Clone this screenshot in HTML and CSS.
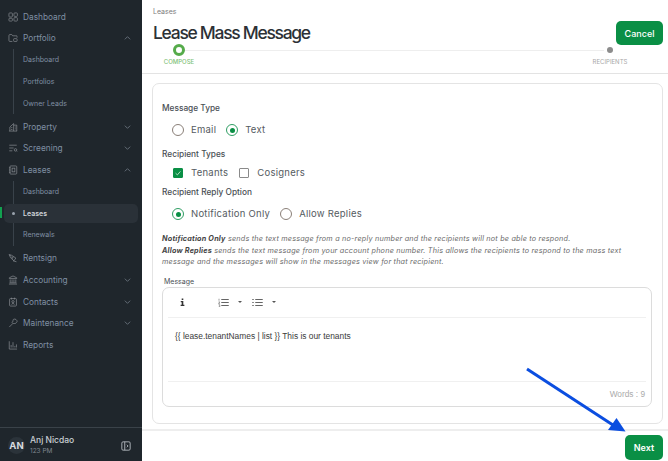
FILE: index.html
```html
<!DOCTYPE html>
<html lang="en">
<head>
<meta charset="utf-8">
<title>Lease Mass Message</title>
<link rel="stylesheet" href="styles.css">
</head>
<body>
<div class="app">
  <aside class="sidebar">
    <nav class="nav">
      <a class="item"><svg class="ico" viewBox="0 0 16 16"><rect x="1.500" y="1.500" width="5.500" height="6.500" rx="1.200"/><rect x="9.500" y="1.500" width="5.500" height="5.500" rx="1.200"/><rect x="1.500" y="10" width="5.500" height="4.500" rx="1.200"/><rect x="9.500" y="9" width="5.500" height="5.500" rx="1.200"/></svg><span>Dashboard</span></a>
      <a class="item"><svg class="ico" viewBox="0 0 16 16"><path d="M7 13.500H3a1.500 1.500 0 0 1-1.500-1.500V4A1.500 1.500 0 0 1 3 2.500h3l1.500 2h5A1.500 1.500 0 0 1 14.500 6v1.500"/><rect x="9" y="9" width="5.500" height="4.500" rx="1"/></svg><span>Portfolio</span><svg class="chev" viewBox="0 0 10 6"><path d="M1 5l4-4 4 4"/></svg></a>
      <div class="sub">
        <a class="subitem">Dashboard</a>
        <a class="subitem">Portfolios</a>
        <a class="subitem">Owner Leads</a>
      </div>
      <a class="item"><svg class="ico" viewBox="0 0 16 16"><path d="M1.500 14.500h13M3 14.500V8l6-5.500V14.500M9 5h5v9.500M11 8h1.500M11 11h1.500M5 9h2M5 12h2"/></svg><span>Property</span><svg class="chev" viewBox="0 0 10 6"><path d="M1 1l4 4 4-4"/></svg></a>
      <a class="item"><svg class="ico" viewBox="0 0 16 16"><path d="M2 3.500h12M2 8h7M2 12.500h5"/><circle cx="12" cy="11" r="2"/><path d="M13.500 12.500l1 1"/></svg><span>Screening</span><svg class="chev" viewBox="0 0 10 6"><path d="M1 1l4 4 4-4"/></svg></a>
      <a class="item"><svg class="ico" viewBox="0 0 16 16"><rect x="3" y="1.500" width="11" height="13" rx="1.500"/><path d="M1.500 4.500h3M1.500 8h3M1.500 11.500h3"/><rect x="6.500" y="5" width="4.500" height="6"/></svg><span>Leases</span><svg class="chev" viewBox="0 0 10 6"><path d="M1 5l4-4 4 4"/></svg></a>
      <div class="sub">
        <a class="subitem">Dashboard</a>
        <a class="subitem current">Leases</a>
        <a class="subitem">Renewals</a>
      </div>
      <a class="item"><svg class="ico" viewBox="0 0 16 16"><path d="M2 2.500l3.500 1 7 4.500-3 4.500-5.500-5zM2 2.500l3 3M8 12.500l5.500 1.500"/><circle cx="7" cy="7.500" r="1"/></svg><span>Rentsign</span></a>
      <a class="item"><svg class="ico" viewBox="0 0 16 16"><path d="M8 1.500l6 3v1H2v-1zM3.500 7v5M6.500 7v5M9.500 7v5M12.500 7v5M2.500 12.500h11M1.500 14.500h13"/></svg><span>Accounting</span><svg class="chev" viewBox="0 0 10 6"><path d="M1 1l4 4 4-4"/></svg></a>
      <a class="item"><svg class="ico" viewBox="0 0 16 16"><rect x="2.500" y="2.500" width="11" height="12" rx="1.500"/><path d="M5.500 1v3M10.500 1v3M5.500 12c.5-2 4.500-2 5 0"/><circle cx="8" cy="7.500" r="1.800"/></svg><span>Contacts</span><svg class="chev" viewBox="0 0 10 6"><path d="M1 1l4 4 4-4"/></svg></a>
      <a class="item"><svg class="ico" viewBox="0 0 16 16"><path d="M2 14.500l6-6M6.500 7l2.500 2.500 1-1 1 1 3.500-3.500A4 4 0 0 0 9 2L7.500 3.500l1 1z"/></svg><span>Maintenance</span><svg class="chev" viewBox="0 0 10 6"><path d="M1 1l4 4 4-4"/></svg></a>
      <a class="item"><svg class="ico" viewBox="0 0 16 16"><path d="M2 2v12.500h12.500M5 12V8M8 12V3.500M11 12V9.500M13.500 12V7"/></svg><span>Reports</span></a>
    </nav>
    <div class="user">
      <div class="avatar">AN</div>
      <div class="who">
        <div class="name">Anj Nicdao</div>
        <div class="time">123 PM</div>
      </div>
      <svg class="collapse" viewBox="0 0 12 12"><rect x="1" y="1" width="10" height="10" rx="1.500"/><path d="M4.500 1v10M7 4.500L8.500 6 7 7.500"/></svg>
    </div>
    <span class="marker"></span>
  </aside>

  <main class="main">
    <header class="head">
      <div class="head-top">
        <div>
          <div class="crumb">Leases</div>
          <h1 class="title">Lease Mass Message</h1>
        </div>
        <button class="btn">Cancel</button>
      </div>
      <div class="steps">
        <div class="step">
          <span class="dot active"></span>
          <span class="step-label on">COMPOSE</span>
        </div>
        <div class="step">
          <span class="dot"></span>
          <span class="step-label">RECIPIENTS</span>
        </div>
      </div>
    </header>

    <section class="body">
      <div class="card">
        <div class="label">Message Type</div>
        <div class="options pad-a">
          <label class="opt"><span class="radio"></span>Email</label>
          <label class="opt"><span class="radio sel"></span>Text</label>
        </div>
        <div class="label gap-b">Recipient Types</div>
        <div class="options pad-b">
          <label class="opt"><span class="check sel"><svg viewBox="0 0 10 10"><path d="M2 5.200l2.200 2.200L8 3"/></svg></span>Tenants</label>
          <label class="opt"><span class="check"></span>Cosigners</label>
        </div>
        <div class="label">Recipient Reply Option</div>
        <div class="options pad-a">
          <label class="opt"><span class="radio sel"></span>Notification Only</label>
          <label class="opt"><span class="radio"></span>Allow Replies</label>
        </div>
        <p class="help"><b>Notification Only</b> sends the text message from a no-reply number and the recipients will not be able to respond.<br><b>Allow Replies</b> sends the text message from your account phone number. This allows the recipients to respond to the mass text<br>message and the messages will show in the messages view for that recipient.</p>
        <div class="msg-label">Message</div>
        <div class="editor">
          <div class="toolbar">
            <svg class="tool-i" viewBox="0 0 8 12"><path d="M2.700 0h2.600v2.400H2.700zM1.200 4h4.100v6H7v2H1v-2h1.700V6H1.200z"/></svg>
            <svg class="tool-l first-list" viewBox="0 0 14 12"><path d="M4 2h10M4 6h10M4 10h10"/><path class="thin" d="M1 1v2.500M.5 5.200h1.500L.5 7.500H2M.5 9h1.500v3H.5"/></svg>
            <span class="caret"></span>
            <svg class="tool-l" viewBox="0 0 14 12"><path d="M4 2h10M4 6h10M4 10h10M0 2h2M0 6h2M0 10h2"/></svg>
            <span class="caret"></span>
          </div>
          <div class="content">{{ lease.tenantNames | list }} This is our tenants</div>
          <div class="count">Words : 9</div>
        </div>
      </div>
    </section>

    <footer class="foot"><button class="btn next">Next</button></footer>
  </main>
</div>
<svg class="arrow" viewBox="0 0 668 461"><path d="M527 369L616 427" stroke="#0b4ee0" stroke-width="3" fill="none"/><path d="M625.500 431.500L608 430 616.500 418z" fill="#0b4ee0"/></svg>
</body>
</html>
```

FILE: styles.css
```css
* { box-sizing: border-box; }
html, body { margin: 0; height: 100%; }
body { font-family: Inter, "Liberation Sans", sans-serif; background: #fff; overflow: hidden; }
.app { display: flex; height: 461px; }

.sidebar { position: relative; width: 142px; flex: none; background: #1f262c; display: flex; flex-direction: column; }
.nav { flex: 1; display: flex; flex-direction: column; padding: 6px 0 0 8px; }
.item { display: flex; align-items: center; height: 21.6px; color: #7f8fa3; font-size: 8.300px; padding-right: 11px; }
.item span { flex: 1; margin-left: 5px; }
.ico { width: 10px; height: 10px; flex: none; fill: none; stroke: #8a8f95; stroke-width: 1.100; }
.chev { width: 7px; height: 4px; flex: none; fill: none; stroke: #7a8490; stroke-width: 1.100; }
.sub { margin: 0 0 2px 5px; border-left: 1px solid #39424a; display: flex; flex-direction: column; }
.subitem { display: flex; align-items: center; height: 21.6px; padding-left: 9px; font-size: 7px; color: #7f8fa3; }
.subitem.current { position: relative; height: 19px; margin: 1.300px 0 1.300px -10px; padding-left: 19px; width: 134px; background: #2a3138; border-radius: 5px; color: #cfd4d9; font-weight: 600; }
.subitem.current::before { content: ""; position: absolute; left: 7.500px; top: 8px; width: 3px; height: 3px; border-radius: 50%; background: #9aa3ad; }
.marker { position: absolute; left: 0; top: 207px; width: 1.500px; height: 11px; background: #12a150; }
.user { height: 34px; flex: none; border-top: 1px solid #3a4249; display: flex; align-items: center; padding: 2px 11px 0 8px; }
.avatar { width: 17px; height: 17px; border-radius: 50%; background: #2b333a; color: #d8dce0; font-size: 9.500px; font-weight: 700; display: flex; align-items: center; justify-content: center; flex: none; }
.who { flex: 1; margin-left: 5px; }
.name { color: #c9ced4; font-size: 8.500px; font-weight: 500; line-height: 11px; }
.time { color: #7f8790; font-size: 6.500px; line-height: 10px; }
.collapse { width: 10px; height: 10px; fill: none; stroke: #a8adb3; stroke-width: 1.200; }

.main { flex: 1; min-width: 0; display: flex; flex-direction: column; }
.head { height: 74px; flex: none; border-bottom: 1px solid #e3e3e3; padding: 7px 5px 0 11px; }
.head-top { display: flex; justify-content: space-between; align-items: flex-start; height: 36px; }
.crumb { font-size: 7px; line-height: 9px; color: #7d7d7d; }
.title { margin: 7px 0 0; font-size: 17.500px; line-height: 20px; font-weight: 500; letter-spacing: -1.300px; color: #2c3136; white-space: nowrap; }
.btn { border: 0; border-radius: 5px; background: #0a8f45; color: #fff; font: 500 9px Inter, "Liberation Sans", sans-serif; width: 47px; height: 24px; margin-top: 14px; padding: 0; }
.steps { position: relative; display: flex; justify-content: space-between; margin: 0 33px 0 6px; }
.steps::before { content: ""; position: absolute; left: 26px; right: 26px; top: 7px; height: 1px; background: #eeeeee; }
.step { position: relative; display: flex; flex-direction: column; align-items: center; width: 40px; }
.dot { width: 6px; height: 6px; border-radius: 50%; background: #8c8c8c; margin: 4px 0 4px; }
.dot.active { width: 12px; height: 12px; margin: 1px 0 1px; background: #fff; border: 3.500px solid #55ab4a; }
.step-label { font-size: 6px; line-height: 9px; color: #a8a8a8; white-space: nowrap; }
.step-label.on { color: #82c27a; font-weight: 500; }

.body { flex: 1; min-height: 0; padding: 9px 5.500px 0 10px; border-bottom: 2px solid #eeeeee; }
.card { height: 341px; border: 1px solid #e4e4e4; border-radius: 7px; padding: 18px 9.500px 0 9px; }
.label { font-size: 8.300px; line-height: 12px; color: #4a4f55; font-weight: 500; }
.gap-b { margin-top: 3px; }
.options { display: flex; gap: 10px; padding-left: 10px; }
.pad-a { padding-top: 10px; padding-bottom: 9px; }
.pad-b { padding-top: 7px; padding-bottom: 7px; }
.opt { display: flex; align-items: center; gap: 7px; font-size: 9.500px; letter-spacing: 0.250px; color: #555b61; line-height: 12px; }
.radio { width: 12px; height: 12px; border-radius: 50%; border: 1px solid #8a7f78; background: #fff; flex: none; position: relative; }
.radio.sel { border-color: #2f9e63; }
.radio.sel::after { content: ""; position: absolute; left: 2.500px; top: 2.500px; width: 5px; height: 5px; border-radius: 50%; background: #0a8f45; }
.check { width: 10px; height: 10px; border: 1px solid #8a8a8a; border-radius: 1px; margin: 0 1px; flex: none; display: flex; background: #fff; }
.check.sel { background: #0a8f45; border-color: #0a8f45; }
.check svg { width: 8px; height: 8px; fill: none; stroke: #d6f0de; stroke-width: 1; }
.help { margin: 4px 0 0; font-family: Inter, sans-serif; font-feature-settings: "cv11"; font-style: italic; font-size: 7.250px; line-height: 11.700px; color: #6b6b6b; letter-spacing: 0.200px; white-space: nowrap; }
.help b { color: #444; font-weight: 700; }
.msg-label { margin: 8.500px 0 0 2px; font-size: 7px; line-height: 10px; color: #4a4f55; }
.editor { height: 120px; border: 1px solid #dcdcdc; border-radius: 7px; display: flex; flex-direction: column; }
.toolbar { height: 30px; flex: none; margin: 0 5px; border-bottom: 1px solid #f0f0f0; display: flex; align-items: center; padding-left: 12px; }
.tool-i { width: 5px; height: 8.500px; fill: #333; }
.tool-l { width: 13px; height: 9px; fill: none; stroke: #444; stroke-width: 1.100; margin-left: 9px; }
.first-list { margin-left: 32px; }
.thin { stroke-width: .7; }
.caret { width: 0; height: 0; border-left: 2px solid transparent; border-right: 2px solid transparent; border-top: 2.500px solid #555; margin-left: 8px; }
.content { flex: 1; padding: 13px 12px; font-family: "Liberation Sans", sans-serif; font-size: 8.400px; line-height: 11px; color: #3a3a3a; }
.count { height: 25px; flex: none; margin: 0 5px; border-top: 1px solid #f0f0f0; display: flex; align-items: center; justify-content: flex-end; padding-right: 1px; font-family: "Liberation Sans", sans-serif; font-size: 8.300px; color: #aaaaaa; }

.foot { height: 30px; flex: none; display: flex; justify-content: flex-end; padding-right: 5px; }
.next { width: 38px; height: 24.500px; margin-top: 4px; font-weight: 600; }

.arrow { position: absolute; left: 0; top: 0; width: 668px; height: 461px; pointer-events: none; }
```
